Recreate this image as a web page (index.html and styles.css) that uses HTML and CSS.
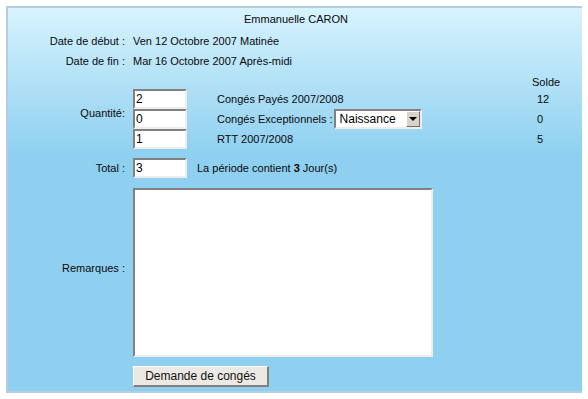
FILE: index.html
```html
<!DOCTYPE html>
<html lang="fr">
<head>
  <meta charset="UTF-8">
  <title>Demande de congés</title>
  <link rel="stylesheet" href="styles.css">
</head>
<body>
  <div class="panel">
    <form class="form">
      <div class="title">Emmanuelle CARON</div>

      <div class="label">Date de début :</div>
      <div class="value">Ven 12 Octobre 2007 Matinée</div>

      <div class="label row-fin">Date de fin :</div>
      <div class="value row-fin">Mar 16 Octobre 2007 Après-midi</div>

      <div class="label qte">Quantité:</div>
      <div class="solde-head">Solde</div>

      <input type="text" class="champ" value="2">
      <div class="type">Congés Payés 2007/2008</div>
      <div class="solde">12</div>

      <input type="text" class="champ" value="0">
      <div class="type">
        Congés Exceptionnels :
        <span class="liste">
          <select>
            <option>Naissance</option>
            <option>Mariage</option>
            <option>Décès</option>
          </select>
          <span class="fleche"></span>
        </span>
      </div>
      <div class="solde">0</div>

      <input type="text" class="champ" value="1">
      <div class="type">RTT 2007/2008</div>
      <div class="solde">5</div>

      <div class="label sep-total">Total :</div>
      <div class="total sep-total">
        <input type="text" class="champ" value="3">
        <span>La période contient <b>3</b> Jour(s)</span>
      </div>

      <div class="label sep-zone">Remarques :</div>
      <textarea class="remarques sep-zone"></textarea>

      <button type="button" class="envoyer">Demande de congés</button>
    </form>
  </div>
</body>
</html>
```

FILE: styles.css
```css
body {
  margin: 6px;
  font-family: "Liberation Sans", Arial, sans-serif;
  font-size: 11px;
  color: #0a0a0a;
}
.panel {
  width: 576px;
  border: 2px solid #b6cde0;
  background: linear-gradient(to bottom, #d7f3fe 0, #8fd0f0 145px, #8fd0f0 100%);
}
.form {
  display: grid;
  grid-template-columns: 117px 76px 307px 52px;
  column-gap: 8px;
  padding-bottom: 4px;
}
.title {
  grid-column: 1 / -1;
  text-align: center;
  line-height: 22px;
}
.label {
  grid-column: 1;
  text-align: right;
  line-height: 22px;
  align-self: center;
}
.value {
  grid-column: 2 / -1;
  line-height: 22px;
}
.row-fin {
  line-height: 19px;
}
.qte {
  grid-row: 4 / span 4;
  padding-top: 6px;
  line-height: 14px;
}
.solde-head {
  grid-column: 4;
  line-height: 14px;
  padding-top: 4px;
}
.champ {
  grid-column: 2;
  box-sizing: border-box;
  width: 54px;
  height: 20px;
  margin: 0;
  padding: 0 1px;
  font-family: "Liberation Sans", Arial, sans-serif;
  font-size: 12px;
  color: #000;
  background: #fff;
  border: 2px solid;
  border-color: #808080 #ededed #ededed #808080;
  outline: none;
}
.type {
  grid-column: 3;
  display: flex;
  align-items: center;
  height: 20px;
}
.solde {
  grid-column: 4;
  line-height: 20px;
  padding-left: 5px;
}
.liste {
  position: relative;
  margin-left: 1px;
}
.liste select {
  appearance: none;
  box-sizing: border-box;
  width: 88px;
  height: 20px;
  margin: 0;
  padding: 0 0 0 4px;
  font-family: "Liberation Sans", Arial, sans-serif;
  font-size: 12px;
  color: #000;
  background: #fff;
  border: 2px solid;
  border-color: #808080 #ededed #ededed #808080;
  border-radius: 0;
  outline: none;
}
.fleche {
  position: absolute;
  top: 2px;
  right: 2px;
  box-sizing: border-box;
  width: 14px;
  height: 16px;
  background: #d8d4cc;
  border: 1px solid;
  border-color: #fff #6f6f6f #6f6f6f #fff;
  pointer-events: none;
}
.fleche::after {
  content: "";
  position: absolute;
  left: 2px;
  top: 5px;
  border-left: 4px solid transparent;
  border-right: 4px solid transparent;
  border-top: 4px solid #000;
}
.total {
  grid-column: 2 / -1;
  display: flex;
  align-items: center;
  gap: 10px;
}
.sep-total {
  margin-top: 8px;
}
.remarques {
  grid-column: 2 / span 2;
  box-sizing: border-box;
  width: 300px;
  height: 169px;
  margin-top: 9px;
  padding: 1px;
  resize: none;
  background: #fff;
  border: 2px solid;
  border-color: #808080 #ededed #ededed #808080;
  outline: none;
}
.envoyer {
  grid-column: 2 / span 2;
  justify-self: start;
  box-sizing: border-box;
  width: 136px;
  height: 21px;
  margin-top: 9px;
  padding: 0;
  font-family: "Liberation Sans", Arial, sans-serif;
  font-size: 12px;
  color: #111;
  background: #ece9e4;
  border: 2px solid;
  border-color: #fff #808080 #808080 #fff;
  border-width: 1px 2px 2px 1px;
  cursor: pointer;
}
```
